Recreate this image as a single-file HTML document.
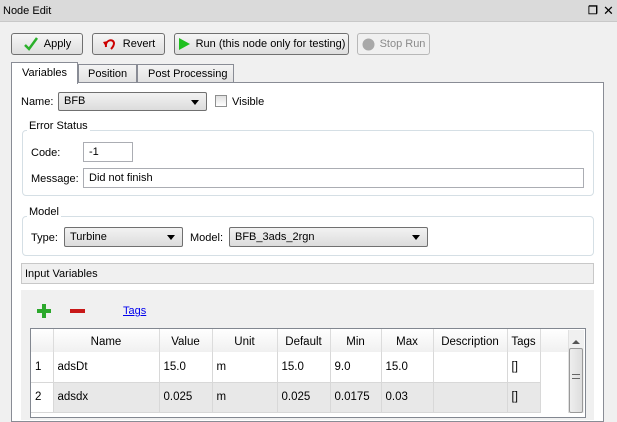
<!DOCTYPE html>
<html><head><meta charset="utf-8"><style>
*{box-sizing:border-box;margin:0;padding:0}
body{width:617px;height:413px;overflow:hidden;background:#f0f0f0;font-family:"Liberation Sans",sans-serif;font-size:11px;color:#000;position:relative}
.a{position:absolute}
.btn{position:absolute;height:22px;border:1px solid #707070;border-radius:3px;background:linear-gradient(#f6f6f6,#dedede);display:flex;align-items:center;justify-content:center;gap:5px}
.inp{position:absolute;background:#fff;border:1px solid #abadb3;height:20px;padding:3px 5px}
.cmb{position:absolute;border:1px solid #707070;border-radius:2px;background:linear-gradient(#f2f2f2,#dcdcdc);height:20px;padding:3px 5px}
.cmb:after{content:"";position:absolute;right:7px;top:7px;border:4px solid transparent;border-top:5px solid #000}
.grp{position:absolute;border:1px solid #d5dfe5;border-radius:4px}
.gt{position:absolute;background:#fff;padding:0 2px}
table{border-collapse:collapse;position:absolute;left:31px;top:329px;background:#fff}
td{height:30px;border-right:1px solid #d8d8d8;border-bottom:1px solid #d8d8d8;padding-left:4px;font-size:11.5px}
th{height:23px;font-weight:normal;background:linear-gradient(#fff,#f0f0f0);border-right:1px solid #dcdcdc;font-size:11.5px;padding-top:2px}
tr.g td{background:#e8e8e8}
</style></head><body>
<div class="a" style="left:0;top:0;width:617px;height:22px;background:#dadada;border-bottom:1px solid #c8c8c8"></div>
<div class="a" style="left:3px;top:5px">Node Edit</div>
<div class="a" style="left:588px;top:4px;font-size:11px;font-weight:bold">&#x2750;</div>
<div class="a" style="left:603px;top:3px;font-size:13px">✕</div>

<div class="btn" style="left:11px;top:33px;width:72px"><svg width="16" height="14"><path d="M2 8 L6 12 L14 1" stroke="#2bb02b" stroke-width="2.5" fill="none"/></svg>Apply</div>
<div class="btn" style="left:92px;top:33px;width:73px"><svg width="16" height="14"><path d="M4 10 C3 3 11 1 12 6 C12 9 10 11 9 12" stroke="#c00" stroke-width="2" fill="none"/><path d="M1 5 L6 4 L4 10Z" fill="#c00"/></svg>Revert</div>
<div class="btn" style="left:174px;top:33px;width:175px"><svg width="13" height="14"><path d="M1 1 L12 7 L1 13Z" fill="#1ec01e"/></svg>Run (this node only for testing)</div>
<div class="btn" style="left:357px;top:33px;width:73px;color:#8a8a8a;border-color:#b8b8b8;background:#f0f0f0"><svg width="13" height="13"><circle cx="6.5" cy="6.5" r="6" fill="#a8a8a8"/></svg>Stop Run</div>

<div class="a" style="left:11px;top:82px;width:593px;height:340px;background:#fff;border:1px solid #898c95"></div>
<div class="a" style="left:11px;top:62px;width:67px;height:22px;background:#fff;border:1px solid #898c95;border-bottom:none;padding:4px 0 0 10px">Variables</div>
<div class="a" style="left:78px;top:64px;width:59px;height:18px;background:linear-gradient(#f4f4f4,#e2e2e2);border:1px solid #898c95;border-bottom:none;padding:3px 0 0 9px">Position</div>
<div class="a" style="left:137px;top:64px;width:97px;height:18px;background:linear-gradient(#f4f4f4,#e2e2e2);border:1px solid #898c95;border-bottom:none;padding:3px 0 0 10px">Post Processing</div>

<div class="a" style="left:21px;top:96px">Name:</div>
<div class="cmb" style="left:58px;top:92px;width:149px;height:19px;padding-top:2px">BFB</div>
<div class="a" style="left:215px;top:95px;width:12px;height:12px;border:1px solid #8e8f8f;background:linear-gradient(#e0e0e0,#fff)"></div>
<div class="a" style="left:232px;top:96px">Visible</div>

<div class="grp" style="left:22px;top:130px;width:572px;height:66px"></div>
<div class="gt" style="left:27px;top:120px">Error Status</div>
<div class="a" style="left:31px;top:147px">Code:</div>
<div class="inp" style="left:83px;top:142px;width:50px">-1</div>
<div class="a" style="left:31px;top:173px">Message:</div>
<div class="inp" style="left:83px;top:168px;width:501px">Did not finish</div>

<div class="grp" style="left:22px;top:216px;width:572px;height:40px"></div>
<div class="gt" style="left:27px;top:206px">Model</div>
<div class="a" style="left:31px;top:232px">Type:</div>
<div class="cmb" style="left:64px;top:227px;width:119px">Turbine</div>
<div class="a" style="left:190px;top:232px">Model:</div>
<div class="cmb" style="left:229px;top:227px;width:199px">BFB_3ads_2rgn</div>

<div class="a" style="left:21px;top:263px;width:573px;height:21px;background:#f0f0f0;border:1px solid #c8c8c8;padding:4px 3px">Input Variables</div>
<div class="a" style="left:21px;top:290px;width:573px;height:130px;background:#f0f0f0"></div>
<div class="a" style="left:37px;top:304px;width:14px;height:14px"><div class="a" style="left:5px;top:0;width:4px;height:14px;background:#2ca82c"></div><div class="a" style="left:0;top:5px;width:14px;height:4px;background:#2ca82c"></div></div>
<div class="a" style="left:70px;top:309px;width:15px;height:4px;background:#c81818"></div>
<div class="a" style="left:123px;top:305px;color:#0000ee;text-decoration:underline">Tags</div>

<div class="a" style="left:30px;top:328px;width:556px;height:90px;border:1px solid #828790;background:#fff"></div>
<table>
<tr><th style="width:22px"></th><th style="width:106px">Name</th><th style="width:53px">Value</th><th style="width:65px">Unit</th><th style="width:53px">Default</th><th style="width:51px">Min</th><th style="width:52px">Max</th><th style="width:74px">Description</th><th style="width:33px">Tags</th><th style="width:28px;border:none"></th></tr>
<tr><td style="background:#fff">1</td><td>adsDt</td><td>15.0</td><td>m</td><td>15.0</td><td>9.0</td><td>15.0</td><td></td><td>[]</td><td style="border:none"></td></tr>
<tr class="g"><td style="background:#fff">2</td><td>adsdx</td><td>0.025</td><td>m</td><td>0.025</td><td>0.0175</td><td>0.03</td><td></td><td>[]</td><td style="border:none;background:#fff"></td></tr>
</table>
<div class="a" style="left:568px;top:330px;width:16px;height:83px;background:#f0f0f0;border-left:1px solid #e0e0e0"></div>
<div class="a" style="left:572px;top:336px;border:4px solid transparent;border-bottom:4px solid #555"></div>
<div class="a" style="left:569px;top:348px;width:14px;height:65px;border:1px solid #999;border-radius:2px;background:linear-gradient(90deg,#eee,#ddd)"></div>
<div class="a" style="left:572px;top:374px;width:8px;height:5px;border-top:1px solid #666;border-bottom:1px solid #666"></div>
</body></html>
